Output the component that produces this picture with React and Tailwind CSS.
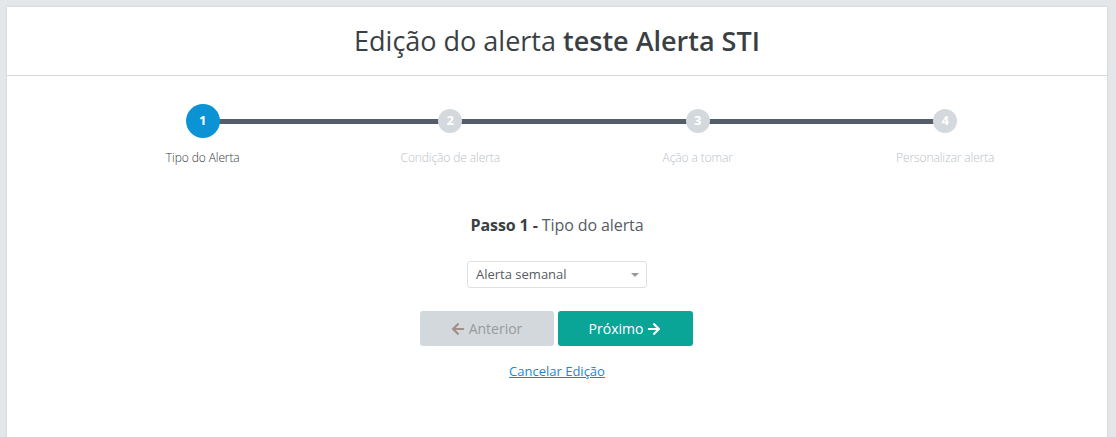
import { FaArrowLeft, FaArrowRight } from 'react-icons/fa'

const steps = [
  { n: 1, label: 'Tipo do Alerta', active: true },
  { n: 2, label: 'Condição de alerta' },
  { n: 3, label: 'Ação a tomar' },
  { n: 4, label: 'Personalizar alerta' },
]

function Stepper() {
  return (
    <div className="ml-[72px] grid w-[990px] grid-cols-4">
      {steps.map((step, i) => (
        <div key={step.n} className="relative flex flex-col items-center">
          {i < steps.length - 1 && (
            <div className="absolute left-1/2 top-[23px] h-[5px] w-full bg-[#545e6a]" />
          )}
          <div className="mt-[8px] flex h-[34px] items-center justify-center">
            {step.active ? (
              <div className="relative z-10 flex h-[34px] w-[34px] items-center justify-center rounded-full bg-[#0b93d6] text-[13px] font-bold text-white">
                {step.n}
              </div>
            ) : (
              <div className="relative z-10 flex h-[24px] w-[24px] items-center justify-center rounded-full bg-[#d3d9dc] text-[13px] font-bold text-white">
                {step.n}
              </div>
            )}
          </div>
          <div
            className={`mt-[11px] text-[12px] font-light tracking-[-0.1px] ${
              step.active ? 'text-[#333a40]' : 'text-[#b9c1c7]'
            }`}
          >
            {step.label}
          </div>
        </div>
      ))}
    </div>
  )
}

export default function App() {
  return (
    <div
      className="h-[437px] overflow-hidden bg-[#e4e7ea] pl-[7px] pt-[7px]"
      style={{ fontFamily: '"Open Sans", sans-serif' }}
    >
      <div className="h-[450px] w-[1100px] bg-white shadow-[0_0_2px_rgba(0,0,0,0.15)]">
        <div className="flex h-[69px] items-center justify-center border-b border-[#d9dcdf]">
          <h1 className="text-[27px] text-[#3a3f44]">
            Edição do alerta <span className="font-semibold">teste Alerta STI</span>
          </h1>
        </div>

        <div className="pt-[20px]">
          <Stepper />
        </div>

        <div className="mt-[46px] flex flex-col items-center">
          <div className="text-[16px] tracking-[-0.1px] text-[#3a3f44]">
            <span className="font-bold">Passo 1 -</span>{' '}
            <span className="text-[#555c63]">Tipo do alerta</span>
          </div>

          <div className="mt-[24px] flex h-[27px] w-[180px] items-center justify-between rounded-[3px] border border-[#dde1e4] pl-[8px] pr-[7px] text-[13px] text-[#555c63]">
            <span>Alerta semanal</span>
            <span className="h-0 w-0 border-x-[4px] border-t-[4px] border-x-transparent border-t-[#999]" />
          </div>

          <div className="mt-[23px] mr-[2px] flex gap-[4px]">
            <button
              type="button"
              className="flex h-[35px] w-[134px] items-center justify-center gap-[4px] rounded-[3px] bg-[#d2d8dc] text-[14px] text-[#9a9a9a]"
            >
              <FaArrowLeft className="h-[14px] w-[14px] text-[#a09088]" />
              Anterior
            </button>
            <button
              type="button"
              className="flex h-[35px] w-[135px] items-center justify-center gap-[4px] rounded-[3px] bg-[#0aa597] text-[14px] text-white"
            >
              Próximo
              <FaArrowRight className="h-[14px] w-[14px]" />
            </button>
          </div>

          <a href="#" className="mt-[16px] text-[13px] text-[#1a87cf] underline">
            Cancelar Edição
          </a>
        </div>
      </div>
    </div>
  )
}
